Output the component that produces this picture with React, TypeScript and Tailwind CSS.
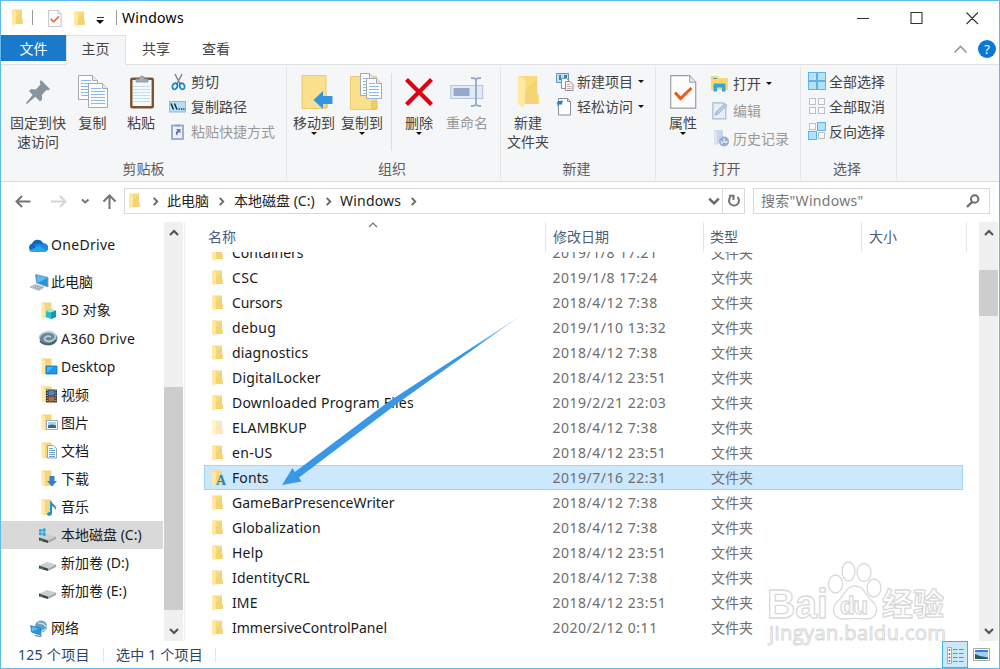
import React from 'react';

type IconProps = { className?: string };

const Folder: React.FC<IconProps> = ({ className = 'w-[11px] h-[17px]' }) => (
    <svg viewBox="0 0 11 17" className={`shrink-0 ${className}`} preserveAspectRatio="none">
        <path d="M.5.500H10v9l1 .8V15H3z" fill="#f9da7c" />
        <path d="M4 8l6-7v14H4z" fill="#f5d274" />
        <path d="M0 .500l3 1.300c.8.400 1 .900 1 1.800L3.500 13 3 17 0 15z" fill="#ffe8a3" />
    </svg>
);

const Chevron: React.FC<{ dir: 'up' | 'down' | 'right'; className?: string; stroke?: number }> = ({ dir, className = 'w-[10px] h-[10px] text-[#555]', stroke = 2 }) => (
    <svg viewBox="0 0 10 10" className={`shrink-0 ${className}`} fill="none" stroke="currentColor" strokeWidth={stroke}>
        {dir === 'up' && <path d="M1 7l4-4 4 4" />}
        {dir === 'down' && <path d="M1 3l4 4 4-4" />}
        {dir === 'right' && <path d="M3 1l4 4-4 4" />}
    </svg>
);

const Caret: React.FC<IconProps> = ({ className = '' }) => (
    <svg viewBox="0 0 6 3" className={`w-[6px] h-[3px] shrink-0 ${className}`}>
        <path d="M0 0h6L3 3z" fill="#111" />
    </svg>
);

const PinIcon = () => (
    <svg viewBox="0 0 26 26" className="w-[26px] h-[26px]">
        <path d="M16 1l9 9-1.6 1.4-2-.4-4.5 5 .3 4.2-2.2 2.2-4.7-4.6L2 25l-1.2-.8L7.6 16 4 12l2.2-2 4.6.4 4.6-4.8-.6-2.6z" fill="#8794a0" />
    </svg>
);

const Sheet: React.FC<{ x: number; y: number; w?: number; h?: number }> = ({ x, y, w = 18, h = 25 }) => (
    <g transform={`translate(${x} ${y})`}>
        <path d={`M.5.5h${w - 6}l5 5v${h - 6}H.5z`} fill="#fbfdff" stroke="#a3a9b0" />
        <path d={`M${w - 5.5}.5v5h5`} fill="#e6eaee" stroke="#a3a9b0" />
        <path d={`M3 5.5h${w - 10}M3 8.5h${w - 6}M3 11.5h${w - 6}M3 14.5h${w - 6}M3 17.5h${w - 6}M3 20.5h${w - 6}`} stroke="#8ab8ee" strokeWidth="1.2" />
    </g>
);

const CopyIcon = () => (
    <svg viewBox="0 0 30 34" className="w-[30px] h-[34px] ml-px">
        <Sheet x={0} y={0} w={20} />
        <Sheet x={10} y={8} w={20} />
    </svg>
);

const PasteIcon = () => (
    <svg viewBox="0 0 26 34" className="w-[26px] h-[34px] ml-px">
        <rect x="2.300" y="3.800" width="21.500" height="28.500" rx="1" fill="#f4f9fc" stroke="#7b5331" strokeWidth="2.400" />
        <path d="M4 11.5h17M4 14.5h17M4 17.5h17M4 20.5h17M4 23.5h17M4 26.5h17" stroke="#c5def0" />
        <path d="M7 7V4h3.500c0-4 5-4 5 0H19v3z" fill="#a9adb1" stroke="#8b8f94" strokeWidth=".8" />
    </svg>
);

const CutIcon = () => (
    <svg viewBox="0 0 15 18" className="w-[15px] h-[18px]" fill="none">
        <path d="M4 1l5.500 11M11 1L5.500 12" stroke="#7b8791" strokeWidth="1.500" />
        <path d="M6 10.500c-3-1-4.600 1-4.600 3.300C1.400 16 3 16.800 4.500 16c1.600-1 2.500-2.700 1.500-5.500zM9 10.500c3-1 4.600 1 4.600 3.300 0 2.200-1.600 3-3.100 2.200-1.600-1-2.500-2.700-1.500-5.500z" stroke="#1d84c6" strokeWidth="1.800" />
    </svg>
);

const CopyPathIcon = () => (
    <svg viewBox="0 0 17 12" className="w-[17px] h-[12px]">
        <rect x=".5" y=".5" width="16" height="10.500" fill="#b4def6" stroke="#83bde2" />
        <path d="M2 2.500l2.500 6M5.500 2.500l2.500 6" stroke="#10283c" strokeWidth="1.400" />
        <path d="M9.500 8h1.300M12 8h1.300M14.300 8h1.200" stroke="#10283c" strokeWidth="1.400" />
    </svg>
);

const PasteShortcutIcon = () => (
    <svg viewBox="0 0 13 17" className="w-[13px] h-[17px]">
        <rect x="1" y="2.500" width="11" height="13.500" fill="#eef2fa" stroke="#8fa3c8" strokeWidth="1.700" />
        <path d="M4 3.500V1.500h5v2z" fill="#8fa3c8" />
        <path d="M5 6h4.500v4.500L8 9c-1.300.8-1.600 2-1.600 3.800C4 11 4.600 8.800 6.500 7.500z" fill="#667ba8" />
    </svg>
);

const MoveIcon = () => (
    <svg viewBox="0 0 32 36" className="w-[32px] h-[36px] ml-[6px]">
        <path d="M1 1.500h24v33H1z" fill="#fadf8c" stroke="#ecca6e" />
        <path d="M25 28l2-1v7h-5z" fill="#f2cd6b" />
        <path d="M12.500 26l9.500-9v5h9.500v8H22v5z" fill="#3695e0" />
    </svg>
);

const CopyToIcon = () => (
    <svg viewBox="0 0 32 38" className="w-[32px] h-[38px] ml-[8px]">
        <path d="M.5 3.500h26v33H.5z" fill="#fadf8c" stroke="#ecca6e" />
        <path d="M22 28h5v8h-5z" fill="#f2cd6b" stroke="#e6bf5c" />
        <Sheet x={10} y={0} w={15} h={23} />
        <Sheet x={16} y={5} w={16} h={21} />
    </svg>
);

const DeleteIcon = () => (
    <svg viewBox="0 0 30 30" className="w-[30px] h-[30px]">
        <path d="M2.500 2.500l25 25M27.500 2.500l-25 25" stroke="#e00012" strokeWidth="4.200" />
    </svg>
);

const RenameIcon = () => (
    <svg viewBox="0 0 34 32" className="w-[34px] h-[32px]">
        <rect x=".7" y="9.500" width="32" height="13" fill="#e2eaf6" stroke="#b1c4e2" />
        <rect x="3.500" y="12" width="16" height="8" fill="#96a9ca" />
        <path d="M26 3v26M21 2c3 0 5 0 5 2 0-2 2-2 5-2M21 30c3 0 5 0 5-2 0 2 2 2 5 2" fill="none" stroke="#97a8c4" strokeWidth="1.800" />
    </svg>
);

const NewItemIcon = () => (
    <svg viewBox="0 0 18 18" className="w-[18px] h-[18px] -ml-px">
        <path d="M.5.500h12v9H.5z" fill="#bfe2f2" stroke="#5e97b8" />
        <path d="M3 2h2v5H3zM8 2h3v3H8z" fill="#3a86b2" />
        <path d="M5.500 5.500h5l2 2v8h-7z" fill="#fafafa" stroke="#8a9299" />
        <path d="M9.500 8.500h4.500l3 3v6H9.500z" fill="#fbf2f2" stroke="#8a9299" />
        <path d="M11 11.500h3M11 13.500h4.500M11 15.500h4.500" stroke="#dba6a6" />
    </svg>
);

const EasyAccessIcon = () => (
    <svg viewBox="0 0 18 18" className="w-[18px] h-[18px] -ml-px">
        <path d="M2.500.500h9l3 3v13.500h-12z" fill="#fdfdfd" stroke="#888f95" />
        <path d="M11.500.500v3h3" fill="none" stroke="#888f95" />
        <path d="M2 3.200l5-.7-1.500 4.500-1.500-.8-3 2 .8-2.500-1.500-.5z" fill="#2b7fc4" />
    </svg>
);

const PropertiesIcon: React.FC<IconProps> = ({ className = 'w-[27px] h-[34px]' }) => (
    <svg viewBox="0 0 27 34" className={className}>
        <path d="M.7.700h19l6 6.500v26H.7z" fill="#fcfcfc" stroke="#999fa5" strokeWidth="1.200" />
        <path d="M19.700.700v6.500h6" fill="#e8eaec" stroke="#999fa5" />
        <path d="M5 17.500l5.500 6L21.500 13" fill="none" stroke="#ec5b1b" strokeWidth="3" />
    </svg>
);

const OpenIcon = () => (
    <svg viewBox="0 0 18 16" className="w-[18px] h-[16px]">
        <path d="M0 0h7l1 2h9v12H0z" fill="#fbd868" />
        <path d="M2 2.500h4" stroke="#3a9fda" />
        <path d="M2.500 15.500V9c0-1 .5-1.500 1.500-1.500h9c1 0 1.500.5 1.500 1.500v6.500H11v-4H6v4z" fill="#37a5dc" />
    </svg>
);

const EditIcon = () => (
    <svg viewBox="0 0 17 18" className="w-[17px] h-[18px] ml-px">
        <path d="M.8.800h10l3 3v13H.8z" fill="#e7edf7" stroke="#a8b8d3" strokeWidth="1.200" />
        <path d="M3 13l1-3 9-8.500 2 2-9 8.500z" fill="#b9cae5" stroke="#93a8cb" strokeWidth=".8" />
    </svg>
);

const HistoryIcon = () => (
    <svg viewBox="0 0 17 17" className="w-[17px] h-[17px] ml-[2px]">
        <path d="M1 0h9v9L4 15l-3-1z" fill="#c9d5eb" />
        <path d="M1 0l3 1.500V16l-3-2z" fill="#dde5f3" />
        <circle cx="11" cy="11.500" r="5" fill="#9aacce" />
        <path d="M11 8.500v3.500h3.500M8 11l1.500 3" stroke="#e9eff9" fill="none" strokeWidth="1.300" />
    </svg>
);

const SelectIcon: React.FC<{ filled: boolean[] }> = ({ filled }) => (
    <div className="grid grid-cols-2 w-[18px] h-[18px] -mt-px -ml-px">
        {filled.map((on, i) => (
            <div key={i} className={on ? 'bg-[#b4e1fc] border border-[#5fb2e6]' : 'bg-[#fbfbfb] border border-[#bdbfc2] m-[1px]'} />
        ))}
    </div>
);

const CloudIcon = () => (
    <svg viewBox="0 0 20 13" className="w-[20px] h-[13px]">
        <path d="M4.500 13A4.400 4.400 0 014 4.600 6 6 0 0115 4.300 4.300 4.300 0 0116 13z" fill="#0f66bd" />
        <path d="M6 5.500L16 4.400A4.300 4.300 0 0116 13H10z" fill="#198bdc" />
        <path d="M1 11.500L11 7l8 4.500c-.7 1-2 1.500-3 1.500H4.500c-1.400 0-2.700-.6-3.500-1.500z" fill="#28a6ea" />
    </svg>
);

const PcIcon = () => (
    <svg viewBox="0 0 19 17" className="w-[19px] h-[17px]">
        <path d="M5.500.500l12.500 3v9.500L6.500 9z" fill="#2794dc" stroke="#7d9cb2" strokeWidth=".8" />
        <path d="M6.500 1.500l10.500 2.600-8 4.500-2-.6z" fill="#5cbcf2" />
        <path d="M0 13l5-2.500 9 2.800-5 3.200z" fill="#c3ccd3" stroke="#94a0a9" strokeWidth=".6" />
        <path d="M3 13l7 2M5.500 11.800l7 2" stroke="#7d8991" strokeWidth=".6" />
    </svg>
);

const A360Icon = () => (
    <svg viewBox="0 0 20 16" className="w-[20px] h-[16px]">
        <ellipse cx="10.500" cy="7.500" rx="9" ry="7" fill="#6d8795" />
        <path d="M1 7c2-7 13-8 16-3 2 5-6 8-10 5-2-3 3-5 6-3" fill="none" stroke="#bdced6" strokeWidth="1.700" />
        <path d="M2 10c4 5 13 4 16-1" fill="none" stroke="#42606f" strokeWidth="1.600" />
    </svg>
);

// small picture laid over the corner of a library folder
const overlays: Record<string, React.ReactNode> = {
    cube: <><path d="M5 9l5-2 5 1.500v6.500l-5 2-5-2z" fill="#2bbccd" /><path d="M5 9l5-2 5 1.500-5 2z" fill="#9eeaf0" /><path d="M10 10.500l5-2v6.500l-5 2z" fill="#1496ad" /></>,
    desktop: <><path d="M5 8h11v8H5z" fill="#1e97ec" stroke="#1670b4" strokeWidth=".8" /><path d="M6 9h6l-5 5H6z" fill="#43b7fa" /></>,
    video: <><path d="M5 3.500h11v13H5z" fill="#3b3c42" /><path d="M7.500 4.500h6v5h-6z" fill="#4c86c6" /><path d="M7.500 10.500h6v5h-6z" fill="#b86a39" /><path d="M6.200 4v12M14.800 4v12" stroke="#d5d5d5" strokeDasharray="1 1.500" /></>,
    picture: <><path d="M5.500 6.500h11v9h-11z" fill="#f8fafb" stroke="#a1a8af" /><path d="M7 8h8v6H7z" fill="#a5d3f2" /><path d="M7 11.500l4-1 4 1V14H7z" fill="#326c80" /></>,
    doc: <><path d="M6.500 3.500h6l3 3V16h-9z" fill="#f9fcff" stroke="#9aa3ac" /><path d="M8 6.500h4M8 8.500h6M8 10.500h6M8 12.500h6M8 14.500h6" stroke="#6aa2d2" /></>,
    download: <path d="M8.500 6h5v5H16l-5 5.500L6 11h2.500z" fill="#2e82cf" />,
    music: <path d="M9 2.500l1.500-.5c0 3 4 3.500 4.500 6.500 0 1.500-1 3-1 3 .5-2.500-1-3.500-3-4.500V14c0 2-1.500 3-3 2.800-2-.2-2.500-2-1-3.200.7-.6 1.500-.7 2-.6z" fill="#218fdb" />,
};

const LibraryIcon: React.FC<{ kind: string }> = ({ kind }) => (
    <svg viewBox="0 0 17 17" className="w-[17px] h-[17px]">
        <path d="M.5.500h10v15.500H3z" fill="#f7d679" />
        <path d="M.5.500L4 2v15L.5 15z" fill="#ffe9a6" />
        {overlays[kind]}
    </svg>
);

const DriveIcon: React.FC<{ system?: boolean }> = ({ system }) => (
    <svg viewBox="0 0 17 15" className="w-[17px] h-[15px]">
        <path d="M0 9.500L8 6l9 2.500-8 4z" fill="#cbcdce" />
        <path d="M0 9.500l9 3V15l-9-2.500z" fill="#3f4749" />
        <path d="M9 12.500l8-4V11l-8 4z" fill="#a5a8aa" />
        <path d="M1.500 12l2 .6" stroke="#54c37a" />
        {system && <path d="M0 1.500L2.700 1v2.800H0zM3.500.800L6.500.300v3.500h-3zM0 4.500h2.700v3L0 7zM3.500 4.500h3V8l-3-.5z" fill="#13a9e6" />}
    </svg>
);

const NetworkIcon = () => (
    <svg viewBox="0 0 18 17" className="w-[18px] h-[17px]">
        <circle cx="11" cy="6.500" r="6" fill="#5e9fc4" />
        <path d="M8 2.500c2 2 5 0 6 2s3 2 3 3M11 12c1-2 4-2 5-3" stroke="#bfe0ec" strokeWidth="1.500" fill="none" />
        <path d="M.7 5.700l10 2.500v7L1.500 12z" fill="#2698e2" stroke="#2a77b0" strokeWidth=".8" />
        <path d="M1.500 6.700l7 1.800-6.500 3z" fill="#58bdf4" />
        <path d="M5 15.500l5 1 2-1" stroke="#5a7384" fill="none" />
    </svg>
);

const BigButton: React.FC<{ icon: React.ReactNode; lines: string[]; className: string; caret?: boolean; disabled?: boolean }> = ({ icon, lines, className, caret, disabled }) => (
    <div className={`flex flex-col items-center shrink-0 ${className}`}>
        <div className="h-[46px] pt-[3px] flex items-center justify-center">{icon}</div>
        <div className={`text-center leading-[19px] whitespace-nowrap ${disabled ? 'text-[#999]' : 'text-[#444]'}`}>
            {lines.map((line) => <div key={line}>{line}</div>)}
        </div>
        {caret && <Caret />}
    </div>
);

const SmallButton: React.FC<{ icon: React.ReactNode; label: string; caret?: boolean; disabled?: boolean }> = ({ icon, label, caret, disabled }) => (
    <div className={`flex items-center h-[25px] whitespace-nowrap ${disabled ? 'text-[#999]' : 'text-[#444]'}`}>
        <div className="w-5 flex items-center">{icon}</div>
        {label}
        {caret && <Caret className="ml-[5px]" />}
    </div>
);

const Group: React.FC<{ title: string; className: string; children: React.ReactNode }> = ({ title, className, children }) => (
    <div className={`flex flex-col border-r border-[#e2e3e4] h-[112px] shrink-0 ${className}`}>
        <div className="flex h-[91px]">{children}</div>
        <div className="text-center text-[#5c5c5c] leading-[21px] pr-[3px]">{title}</div>
    </div>
);

const tree = [
    { label: '3D 对象', icon: <LibraryIcon kind="cube" /> },
    { label: 'A360 Drive', icon: <div className="-ml-[3px]"><A360Icon /></div>, wide: true },
    { label: 'Desktop', icon: <LibraryIcon kind="desktop" /> },
    { label: '视频', icon: <LibraryIcon kind="video" /> },
    { label: '图片', icon: <LibraryIcon kind="picture" /> },
    { label: '文档', icon: <LibraryIcon kind="doc" /> },
    { label: '下载', icon: <LibraryIcon kind="download" /> },
    { label: '音乐', icon: <LibraryIcon kind="music" /> },
    { label: '本地磁盘 (C:)', icon: <div className="-ml-[2px]"><DriveIcon system /></div>, selected: true },
    { label: '新加卷 (D:)', icon: <div className="-ml-[2px]"><DriveIcon /></div> },
    { label: '新加卷 (E:)', icon: <div className="-ml-[2px]"><DriveIcon /></div> },
];

// spacing: letter spacing that brings the name to the Segoe-like width
const files = [
    { name: 'Containers', date: '2019/1/8 17:21' },
    { name: 'CSC', date: '2019/1/8 17:24', spacing: 'tracking-[0.4px]' },
    { name: 'Cursors', date: '2018/4/12 7:38', spacing: 'tracking-[-0.1px]' },
    { name: 'debug', date: '2019/1/10 13:32', spacing: 'tracking-[0.4px]' },
    { name: 'diagnostics', date: '2018/4/12 7:38', spacing: 'tracking-[0.15px]' },
    { name: 'DigitalLocker', date: '2018/4/12 23:51', spacing: 'tracking-[0.2px]' },
    { name: 'Downloaded Program Files', date: '2019/2/21 22:03', spacing: 'tracking-[0.2px]' },
    { name: 'ELAMBKUP', date: '2018/4/12 7:38', hidden: true, spacing: 'tracking-[0.2px]' },
    { name: 'en-US', date: '2018/4/12 23:51', spacing: 'tracking-[0.3px]' },
    { name: 'Fonts', date: '2019/7/16 22:31', selected: true, spacing: 'tracking-[0.1px]' },
    { name: 'GameBarPresenceWriter', date: '2018/4/12 7:38' },
    { name: 'Globalization', date: '2018/4/12 7:38', spacing: 'tracking-[0.2px]' },
    { name: 'Help', date: '2018/4/12 23:51', spacing: 'tracking-[0.2px]' },
    { name: 'IdentityCRL', date: '2018/4/12 7:38', spacing: 'tracking-[0.2px]' },
    { name: 'IME', date: '2018/4/12 23:51', spacing: 'tracking-[0.1px]' },
    { name: 'ImmersiveControlPanel', date: '2020/2/12 0:11' },
];

const TitleBar = () => (
    <div className="flex items-center h-[34px] pl-[11px] pb-px shrink-0">
        <Folder />
        <div className="w-px h-[15px] bg-[#999] ml-[9px]" />
        <PropertiesIcon className="w-[14px] h-[17px] ml-[15px] mt-[2px]" />
        <Folder className="w-[11px] h-[16px] ml-[12px] mt-[2px]" />
        <div className="ml-[11px] flex flex-col items-center gap-[2px] pt-[6px]">
            <div className="w-[7px] h-px bg-[#333]" />
            <svg viewBox="0 0 8 4" className="w-[8px] h-[4px]"><path d="M0 0h8L4 4z" fill="#111" /></svg>
        </div>
        <div className="w-px h-[15px] bg-[#999] ml-[12px] mr-[5px]" />
        <span className="text-black tracking-[0.3px]">Windows</span>
        <svg viewBox="0 0 124 14" className="w-[124px] h-[14px] ml-auto mr-[19px]" fill="none" stroke="#333" strokeWidth="1.100">
            <path d="M1 7.500h12M55 1.500h11v11H55zM110.500 1.500l11.500 11.500M122 1.500L110.500 13" />
        </svg>
    </div>
);

const Tabs = () => (
    <div className="flex h-[30px] shrink-0 text-[#444] border-b border-[#dfe0e1] leading-[27px] text-center">
        <div className="w-[65px] h-[26px] bg-[#1979ca] text-white">文件</div>
        <div className="w-[60px] h-[30px] bg-[#f5f6f7] border border-b-0 border-[#dfe0e1] leading-[26px] pr-px">主页</div>
        <div className="w-[60px]">共享</div>
        <div className="w-[60px]">查看</div>
        <div className="ml-auto flex items-center gap-[10px] pr-[3px] pb-px">
            <Chevron dir="up" stroke={1.1} className="w-[15px] h-[15px] text-[#999]" />
            <div className="w-[18px] h-[18px] rounded-full bg-[#0b78d7] text-white text-[13px] leading-[18px]">?</div>
        </div>
    </div>
);

const Ribbon = () => (
    <div className="flex h-[117px] shrink-0 bg-[#f5f6f7] border-b border-[#dcdddd] pt-[2px]">
        <Group title="剪贴板" className="w-[286px] [&>div:last-child]:pr-0">
            <BigButton icon={<PinIcon />} lines={['固定到快', '速访问']} className="w-[58px] ml-2" />
            <BigButton icon={<CopyIcon />} lines={['复制']} className="w-[49px] ml-[1px]" />
            <BigButton icon={<PasteIcon />} lines={['粘贴']} className="w-[48px]" />
            <div className="ml-[6px] pt-[2px]">
                <SmallButton icon={<CutIcon />} label="剪切" />
                <SmallButton icon={<div className="-ml-[2px]"><CopyPathIcon /></div>} label="复制路径" />
                <SmallButton icon={<PasteShortcutIcon />} label="粘贴快捷方式" disabled />
            </div>
        </Group>
        <Group title="组织" className="w-[214px]">
            <BigButton icon={<MoveIcon />} lines={['移动到']} className="w-[48px] ml-[3px]" caret />
            <BigButton icon={<CopyToIcon />} lines={['复制到']} className="w-[48px]" caret />
            <div className="w-px h-[78px] mt-[6px] ml-[5px] bg-[#dcdde0]" />
            <BigButton icon={<DeleteIcon />} lines={['删除']} className="w-[48px] ml-[3px]" caret />
            <BigButton icon={<RenameIcon />} lines={['重命名']} className="w-[48px]" disabled />
        </Group>
        <Group title="新建" className="w-[155px]">
            <BigButton icon={<Folder className="w-[21px] h-[33px]" />} lines={['新建', '文件夹']} className="w-[50px] ml-[2px]" />
            <div className="ml-[4px] pt-[2px]">
                <SmallButton icon={<NewItemIcon />} label="新建项目" caret />
                <SmallButton icon={<EasyAccessIcon />} label="轻松访问" caret />
            </div>
        </Group>
        <Group title="打开" className="w-[145px]">
            <BigButton icon={<PropertiesIcon />} lines={['属性']} className="w-[50px] ml-[2px]" caret />
            <div className="ml-[3px] pt-[4px] flex flex-col gap-[2.5px] [&>div>div]:w-[22px]">
                <SmallButton icon={<OpenIcon />} label="打开" caret />
                <SmallButton icon={<EditIcon />} label="编辑" disabled />
                <SmallButton icon={<HistoryIcon />} label="历史记录" disabled />
            </div>
        </Group>
        <Group title="选择" className="w-[96px]">
            <div className="pl-[8px] pt-[2px]">
                <SmallButton icon={<SelectIcon filled={[true, true, true, true]} />} label="全部选择" />
                <SmallButton icon={<SelectIcon filled={[false, false, false, false]} />} label="全部取消" />
                <SmallButton icon={<SelectIcon filled={[false, true, true, false]} />} label="反向选择" />
            </div>
        </Group>
    </div>
);

const AddressBar = () => (
    <div className="flex items-center h-[38px] shrink-0 pr-[9px]">
        <svg viewBox="0 0 123 18" className="w-[123px] h-[18px] shrink-0" fill="none" strokeWidth="2">
            <path d="M15.500 9.500h14M21 4l-5.500 5.500L21 15" stroke="#737373" />
            <path d="M50 9.500h14M59 4l5.500 5.500L59 15" stroke="#d4d4d4" />
            <path d="M81 7.500l3.200 3L87.500 7.500" stroke="#777" />
            <path d="M108.500 17V4M102.500 9.500l6-6 6 6" stroke="#737373" />
        </svg>
        <div className="flex items-center w-[621px] h-[26px] border border-[#d9d9d9] pl-[4px] text-[#222] shrink-0">
            <Folder className="w-[11px] h-[16px]" />
            <Chevron dir="right" className="w-[9px] h-[9px] text-[#666] ml-[11px] mr-[7px]" />
            此电脑
            <Chevron dir="right" className="w-[9px] h-[9px] text-[#666] ml-[8px] mr-[8px]" />
            <span className="w-[82px] whitespace-nowrap">本地磁盘 (C:)</span>
            <Chevron dir="right" className="w-[9px] h-[9px] text-[#666] ml-[8px] mr-[7px]" />
            <span className="w-[62px] tracking-[0.2px]">Windows</span>
            <Chevron dir="right" className="w-[9px] h-[9px] text-[#666] ml-[7px]" />
            <Chevron dir="down" className="w-[12px] h-[12px] text-[#666] ml-auto mr-[2px]" />
            <div className="w-[22px] h-full border-l border-[#d9d9d9] flex items-center justify-center">
                <svg viewBox="0 0 14 14" className="w-[14px] h-[14px]" fill="none" stroke="#737373" strokeWidth="2">
                    <path d="M10.500 3a5 5 0 11-7 0" />
                    <path d="M2 1.800h4.500V6" />
                </svg>
            </div>
        </div>
        <div className="flex items-center ml-auto w-[237px] h-[26px] border border-[#d9d9d9] pl-[7px] pr-[9px] text-[#777] tracking-[0.3px]">
            搜索"Windows"
            <svg viewBox="0 0 14 14" className="w-[14px] h-[14px] ml-auto" fill="none" stroke="#6e6e6e">
                <circle cx="8.700" cy="5" r="3.700" strokeWidth="2" />
                <path d="M6.200 7.800L1 13" strokeWidth="2.400" />
            </svg>
        </div>
    </div>
);

const TreeRow: React.FC<{ label: string; icon: React.ReactNode; root?: boolean; selected?: boolean; wide?: boolean }> = ({ label, icon, root, selected, wide }) => (
    <div className={`flex items-center h-[28.1px] text-[#1a1a1a] whitespace-nowrap ${root ? 'pl-[27px]' : 'pl-[40px]'} ${selected ? 'bg-[#d9d9d9]' : ''} ${wide ? 'tracking-[0.3px]' : ''}`}>
        <div className={`flex items-center ${root ? 'w-[23px]' : 'w-5'}`}>{icon}</div>
        {label}
    </div>
);

const NavPane = () => (
    <div className="flex w-[184px] shrink-0 border-r border-[#f0f0f0] h-[419px]">
        <div className="w-[162px] pt-[9px]">
            <TreeRow root label="OneDrive" icon={<CloudIcon />} wide />
            <div className="mt-[9.200px]">
                <TreeRow root label="此电脑" icon={<div className="pl-[2px]"><PcIcon /></div>} />
                {tree.map((node) => <TreeRow key={node.label} label={node.label} icon={node.icon} selected={node.selected} wide={node.wide} />)}
            </div>
            <div className="mt-[9px]"><TreeRow root label="网络" icon={<div className="pl-[2px]"><NetworkIcon /></div>} /></div>
        </div>
        <div className="w-[19px] ml-px bg-[#f0f0f0] flex flex-col items-center pt-[6px] pb-[5px]">
            <Chevron dir="up" stroke={2.2} />
            <div className="w-[19px] h-[223px] mt-[149px] mb-auto bg-[#cdcdcd] shrink-0" />
            <Chevron dir="down" stroke={2.2} />
        </div>
    </div>
);

const FileList = () => (
    <div className="relative flex flex-col grow h-[419px] overflow-hidden">
        <div className="flex h-[30px] shrink-0 text-[#4c607a] leading-[30px] pl-[23px]">
            <div className="w-[338px] border-r border-[#e5e5e5]">名称</div>
            <div className="w-[158px] border-r border-[#e5e5e5] pl-[7px]">修改日期</div>
            <div className="w-[158px] border-r border-[#e5e5e5] pl-[6px]">类型</div>
            <div className="w-[105px] border-r border-[#e5e5e5] pl-[7px]">大小</div>
        </div>
        <Chevron dir="up" stroke={1.2} className="absolute left-[183px] top-[-2px] w-[10px] h-[10px] text-[#777]" />
        <div className="h-[389px] overflow-hidden flex flex-col justify-end shrink-0 pl-[19px] pb-[0.6px]">
            {files.map((file) => (
                <div key={file.name} className={`flex items-center w-[759px] h-[25px] shrink-0 border ${file.selected ? 'bg-[#cce8ff] border-[#a0d5f8]' : 'border-transparent'}`}>
                    <div className={`relative w-[27px] pl-[7px] ${file.hidden ? 'opacity-50' : ''}`}>
                        <Folder className="w-[11px] h-[16px]" />
                        {file.selected && <span className="absolute left-[11px] top-[3px] text-[14px] leading-[16px] text-[#2184bd] font-bold font-['Liberation_Serif',serif]">A</span>}
                    </div>
                    <div className={`w-[320.500px] text-[#1a1a1a] whitespace-nowrap ${file.spacing ?? ''}`}>{file.name}</div>
                    <div className="w-[158.500px] text-[#6d6d6d] whitespace-nowrap tracking-[0.52px]">{file.date}</div>
                    <div className="text-[#6d6d6d]">文件夹</div>
                </div>
            ))}
        </div>
    </div>
);

const StatusBar = () => (
    <div className="flex items-center h-[27px] shrink-0 pl-[17px] text-[#2c4467]">
        <span className="w-[85px] tracking-[0.3px]">125 个项目</span>
        <span className="w-[113px] h-[14px] leading-[14px] border-x border-[#e5e5e5] pl-[12px] whitespace-nowrap tracking-[0.2px]">选中 1 个项目</span>
        <div className="ml-auto w-[26px] h-[27px] border border-[#41b0e4] bg-[#cbe8f6] flex items-center justify-center">
            <svg viewBox="0 0 18 18" className="w-[18px] h-[18px]">
                <path d="M1.500 1.500h4v16h-4z" fill="#fff" stroke="#999" strokeWidth=".8" />
                <path d="M2.700 4h1.600M2.700 8h1.600M2.700 15h1.600" stroke="#555" strokeWidth="1.500" />
                <path d="M2.700 11.500h1.600" stroke="#d33" strokeWidth="1.500" />
                <path d="M7 3.500h4.500M13 3.500h4.500M7 7.500h4.500M13 7.500h4.500M7 11.500h4.500M13 11.500h4.500M7 15.500h4.500M13 15.500h4.500" stroke="#7b8b93" />
            </svg>
        </div>
        <svg viewBox="0 0 17 13" className="w-[17px] h-[13px] ml-[5px] mr-[9px]">
            <path d="M.5.500h16v12H.5z" fill="#fff" stroke="#aaa" />
            <path d="M2 2h13v9H2z" fill="#9dd0f6" />
            <path d="M2 2h13v2H2z" fill="#397fd6" />
            <path d="M2 6l5 2 8 1.500V11H2z" fill="#285d61" />
        </svg>
    </div>
);

const Watermark = () => (
    <svg viewBox="0 0 190 90" className="absolute left-[764px] top-[557px] w-[190px] h-[90px]" fill="#fff" stroke="#d9d9d9" strokeWidth="1.300">
        <g className="font-['Liberation_Sans','Noto_Sans_CJK_SC',sans-serif] font-bold" strokeLinejoin="round">
            <text x="2" y="60" fontSize="40" textLength="61" lengthAdjust="spacingAndGlyphs">Bai</text>
            <text x="117" y="57" fontSize="31" textLength="62" lengthAdjust="spacingAndGlyphs">经验</text>
        </g>
        <ellipse cx="70.500" cy="26" rx="7" ry="9" />
        <ellipse cx="83.500" cy="13.500" rx="6.500" ry="9.500" />
        <ellipse cx="99" cy="14.500" rx="7" ry="9" />
        <ellipse cx="109" cy="30" rx="7" ry="9" />
        <path d="M90 28c9 0 10 9 17 15 8 7 5 18-6 18-8-1-14-1-22 0-11 0-14-11-6-18 7-6 8-15 17-15z" />
        <text x="75" y="56" fontSize="24" textLength="28" className="font-['Liberation_Sans',sans-serif] font-bold">du</text>
        <text x="4" y="82" fontSize="20" textLength="177" className="font-['Open_Sans',sans-serif]" strokeWidth="1">jingyan.baidu.com</text>
    </svg>
);

const App: React.FC = () => {
    return (
        <div className="relative flex flex-col w-[1000px] h-[669px] overflow-hidden bg-white border border-[#63b8ee] text-[14px] leading-[20px] font-['Noto_Sans','Noto_Sans_CJK_SC',sans-serif]">
            <TitleBar />
            <Tabs />
            <Ribbon />
            <AddressBar />
            <div className="flex h-[421px] pt-[2px] shrink-0">
                <NavPane />
                <FileList />
                <div className="w-[19px] h-[419px] bg-[#f0f0f0] flex flex-col items-center pt-[6px] pb-[5px] mr-px shrink-0">
                    <Chevron dir="up" stroke={2.2} />
                    <div className="w-[19px] h-[46px] mt-[32px] mb-auto bg-[#cdcdcd]" />
                    <Chevron dir="down" stroke={2.2} />
                </div>
            </div>
            <StatusBar />
            <Watermark />
            <svg viewBox="280 310 245 180" className="absolute left-[279px] top-[309px] w-[245px] h-[180px]">
                <defs>
                    <linearGradient id="tail" x1="1" y1="0" x2="0" y2="1">
                        <stop offset="0" stopColor="#3a96e6" stopOpacity=".3" />
                        <stop offset=".2" stopColor="#3a96e6" />
                    </linearGradient>
                </defs>
                <path d="M282 485L292.500 468l2.300 4L388 402 521 315.500 400 401.500 299 477.500l2.500 4z" fill="url(#tail)" />
            </svg>
        </div>
    );
};

export default App;
